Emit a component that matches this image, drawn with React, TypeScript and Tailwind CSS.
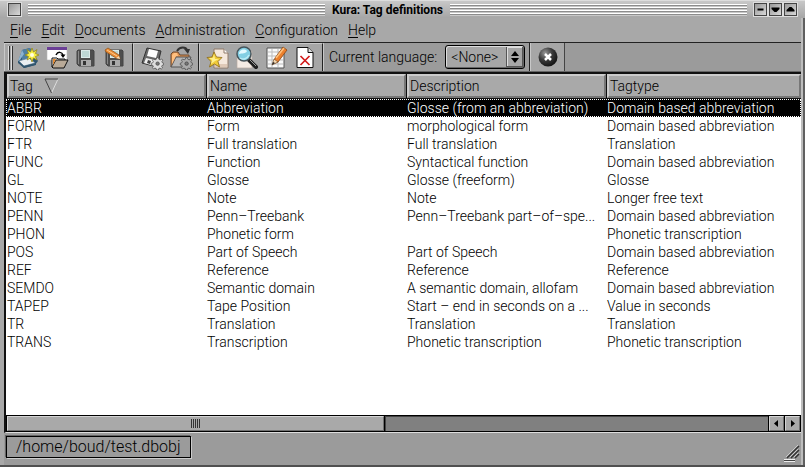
import type { ReactNode } from "react";

const menus = ["File", "Edit", "Documents", "Administration", "Configuration", "Help"];

const columns = ["Tag", "Name", "Description", "Tagtype"];

const rows = [
  ["ABBR", "Abbreviation", "Glosse (from an abbreviation)", "Domain based abbreviation"],
  ["FORM", "Form", "morphological form", "Domain based abbreviation"],
  ["FTR", "Full translation", "Full translation", "Translation"],
  ["FUNC", "Function", "Syntactical function", "Domain based abbreviation"],
  ["GL", "Glosse", "Glosse (freeform)", "Glosse"],
  ["NOTE", "Note", "Note", "Longer free text"],
  ["PENN", "Penn–Treebank", "Penn–Treebank part–of–spe...", "Domain based abbreviation"],
  ["PHON", "Phonetic form", "", "Phonetic transcription"],
  ["POS", "Part of Speech", "Part of Speech", "Domain based abbreviation"],
  ["REF", "Reference", "Reference", "Reference"],
  ["SEMDO", "Semantic domain", "A semantic domain, allofam", "Domain based abbreviation"],
  ["TAPEP", "Tape Position", "Start – end in seconds on a ...", "Value in seconds"],
  ["TR", "Translation", "Translation", "Translation"],
  ["TRANS", "Transcription", "Phonetic transcription", "Phonetic transcription"],
];

function Icon({ children }: { children: ReactNode }) {
  return (
    <svg viewBox="0 0 24 24" className="block size-6" aria-hidden="true">
      {children}
    </svg>
  );
}

const gear =
  "M16 10h2l.5 2 1.5.6 1.8-1 1.2 1.4-1.1 1.7.6 1.3 1.5.5v2l-1.7.5-.6 1.3 1 1.6-1.3 1.3-1.7-1-1.4.6-.5 1.7h-2l-.5-1.7-1.4-.6-1.6 1-1.3-1.3 1-1.6-.6-1.3-1.8-.5v-2l1.8-.5.6-1.3-1-1.7 1.3-1.4 1.7 1 1.4-.6z";

function Gear({ fill }: { fill: string }) {
  return (
    <g transform="translate(3 3) scale(.86)">
      <path d={gear} fill={fill} stroke="#444" strokeWidth=".8" />
      <circle cx="17" cy="17" r="2" fill="#777" stroke="#333" strokeWidth=".7" />
    </g>
  );
}

function Floppy() {
  return (
    <g>
      <path d="M4 4h15l1 1v15H5l-2-2V5z" fill="#4e4e4e" stroke="#444" />
      <path d="M7 4h9v8H7z" fill="#dcebea" />
      <path d="M8 6h7M8 8h7M8 10h7" stroke="#9fc4c0" />
      <path d="M7 14h10v6H7z" fill="#aaa" />
      <path d="M9 15h3v4H9z" fill="#333" />
      <path d="M4.500 5v13" stroke="#888" />
    </g>
  );
}

const tools: { label: string; art: ReactNode }[][] = [
  [
    {
      label: "New",
      art: (
        <Icon>
          <path d="M6 4l8-2 8 13-3 4-11 3-6-6z" fill="#2f5570" />
          <path d="M6 4l8-2 4 9-12 3z" fill="#4f7fa3" />
          <path d="M6 4L2 15l2-1 4-6z" fill="#8db3cf" />
          <path d="M3 15l10-3 6 5-11 3z" fill="#e9eef2" stroke="#66849b" strokeWidth=".7" />
          <path d="M2 15l6 5 12-3v2L8 22l-6-5z" fill="#31566f" />
          <path d="M16 2l1.500 4L21 3.500 19.500 7.500 23 9l-3.500 1.500L21 14l-3.500-2L16 16l-1.500-4L11 14l1.500-3.500L9 9l3.500-1.500L11 3.500 14.500 6z" fill="#f7ee45" stroke="#92861c" strokeWidth=".8" />
          <circle cx="16" cy="9" r="2" fill="#fffde0" />
        </Icon>
      ),
    },
    {
      label: "Open",
      art: (
        <Icon>
          <path d="M2 1h20v13H2z" fill="#fff" stroke="#bbb" strokeWidth=".6" />
          <path d="M2 1h20v3H2z" fill="#6b3f96" />
          <path d="M7 21V12h5l1 1h7v3" fill="#fff" stroke="#111" />
          <path d="M7 21l4-7h12l-4 8H8z" fill="#b9aa98" stroke="#111" />
          <path d="M8 20V13h3l-3 6z" fill="#e58b32" />
          <path d="M11 9c2-4 6-3 7 0" fill="none" stroke="#000" strokeWidth="1.500" />
          <path d="M15.500 8.500h5L18 12z" fill="#000" />
        </Icon>
      ),
    },
    { label: "Save", art: <Icon><Floppy /></Icon> },
    {
      label: "Save as",
      art: (
        <Icon>
          <Floppy />
          <path d="M2 4l3-2 11 7 1 4-4-1L3 6z" fill="#ea8c35" stroke="#8d4e14" strokeWidth=".7" />
          <path d="M4 4l10 6" stroke="#ffc98a" />
          <path d="M13 12l4 1-1-3z" fill="#f4dcb8" />
        </Icon>
      ),
    },
  ],
  [
    {
      label: "Save settings",
      art: (
        <Icon>
          <path d="M7 2l14 3-4 16L2 17z" fill="#686868" stroke="#333" />
          <path d="M9 3l9 2-2 7-9-2z" fill="#fff" />
          <path d="M6 12l9 2-1 6-10-3z" fill="#eee" />
          <path d="M8 14l3 1-1 3-3-1z" fill="#444" />
          <Gear fill="#ddd" />
        </Icon>
      ),
    },
    {
      label: "Open settings",
      art: (
        <Icon>
          <path d="M8 5c3-5 9-4 10-1" fill="none" stroke="#333" strokeWidth="2" />
          <path d="M15 3h6l-2 5z" fill="#333" />
          <path d="M2 21V8l2-2h5l2 3h9v5" fill="#df9250" stroke="#6c492e" />
          <path d="M2 21l5-10h15l-4 10z" fill="#b6b6b6" stroke="#555" />
          <path d="M3 18V9l2-2h3l1 3H7z" fill="#ffc080" />
          <Gear fill="#aaa" />
        </Icon>
      ),
    },
  ],
  [
    {
      label: "Add item",
      art: (
        <Icon>
          <path d="M8 3h10l4 4v15H8z" fill="#f5e8dc" stroke="#8f7b6b" />
          <path d="M18 3v4h4" fill="#fff" stroke="#8f7b6b" />
          <path d="M9 18h12v3H9z" fill="#dfc9b7" />
          <path d="M8 6l2.500 5 5.500.5-4 4 1.500 5.500L8.500 18l-5 3 1.500-5.500-4-4 5-.5z" fill="#f0cb39" stroke="#8a6817" strokeWidth=".8" />
          <path d="M8 8l1 5 4 0-4 2-4 3 1-4-3-2 4 0z" fill="#fff08b" />
        </Icon>
      ),
    },
    {
      label: "Find",
      art: (
        <Icon>
          <path d="M2 5h15v17H2z" fill="#f4ebe4" stroke="#b7a9a0" strokeWidth=".7" />
          <path d="M14 14l7 7" stroke="#1f1f1f" strokeWidth="4" strokeLinecap="round" />
          <path d="M15 14l6 6" stroke="#999" />
          <circle cx="9" cy="8" r="7" fill="#83cfe3" stroke="#46545b" strokeWidth="1.500" />
          <path d="M4 8c0-4 5-6 8-3-1 3-5 2-8 3z" fill="#e4faff" />
          <path d="M5 12c3 2 7 1 9-3" fill="none" stroke="#bcecf5" strokeWidth="1.500" />
        </Icon>
      ),
    },
    {
      label: "Edit item",
      art: (
        <Icon>
          <path d="M3 2h17v20H3z" fill="#fafafa" stroke="#555" />
          <path d="M4 6h15M4 10h15M4 14h15M4 18h15M8 3v18M14 3v18" stroke="#bbb" />
          <path d="M9 18l2-6L19 1l4 3-9 12z" fill="#ed802c" stroke="#874515" strokeWidth=".8" />
          <path d="M12 12l8-10" stroke="#ffc27c" strokeWidth="1.500" />
          <path d="M8 19l2-6 4 3z" fill="#f4d9b2" stroke="#6b4523" strokeWidth=".6" />
          <path d="M8 19l1-3 2 1z" fill="#222" />
        </Icon>
      ),
    },
    {
      label: "Delete item",
      art: (
        <Icon>
          <path d="M4 1.500h11l5 5v15H4z" fill="#fff" stroke="#111" />
          <path d="M15 1.500v5h5" fill="#ddd" stroke="#111" />
          <path d="M7.500 10l9 9M16.500 10l-9 9" stroke="#d21b1b" strokeWidth="1.700" />
        </Icon>
      ),
    },
  ],
];

const raised = "border border-t-[#d4d4d4] border-l-[#d4d4d4] border-r-[#707070] border-b-[#707070]";

function TitleButton({ label, children }: { label: string; children?: ReactNode }) {
  return (
    <button
      aria-label={label}
      className="size-[13px] shrink-0 border border-[#444] bg-linear-to-br from-[#999] to-[#d8d8d8] shadow-[0_0_0_1px_#ddd]"
    >
      <svg viewBox="0 0 11 11" className="block size-[11px]" aria-hidden="true">
        {children}
      </svg>
    </button>
  );
}

function Stripes() {
  return (
    <div className="h-3 flex-1 bg-[repeating-linear-gradient(to_bottom,#fff_0px,#fff_1px,#8c8c8c_1px,#8c8c8c_2px,#c8c8c8_2px,#c8c8c8_3px)]" />
  );
}

function ScrollButton({ label, d }: { label: string; d: string }) {
  return (
    <button aria-label={label} className={`h-full w-[15px] shrink-0 bg-[#a9a9a9] ${raised}`}>
      <svg viewBox="0 0 13 13" className="block size-[13px]" aria-hidden="true">
        <path d={d} fill="#000" />
      </svg>
    </button>
  );
}

export default function App() {
  return (
    <div className="relative flex min-h-screen flex-col border-b-2 border-[#505050] bg-[#9b9b9b] font-['Roboto','Liberation_Sans',sans-serif] text-sm leading-[18px] font-light text-black">
      <header className="flex h-[18px] items-center gap-[7px] border-t border-[#ddd] bg-linear-to-b from-[#c8c8c8] to-[#a6a6a6] px-2">
        <TitleButton label="Close" />
        <Stripes />
        <h1 className="text-xs leading-4 font-bold">Kura: Tag definitions</h1>
        <Stripes />
        <div className="flex gap-0.5">
          <TitleButton label="Iconify">
            <path d="M2.500 4.500h6v2h-6z" />
          </TitleButton>
          <TitleButton label="Lower">
            <path d="M1.500 3.500h8v1.500L6.500 8h-2l-3-3z" />
          </TitleButton>
          <TitleButton label="Raise">
            <path d="M1.500 7.500h8V6L6.500 3h-2l-3 3z" />
          </TitleButton>
        </div>
      </header>

      <div className="flex flex-1 flex-col border-r-2 border-l-4 border-r-[#606060] border-l-[#a8a8a8]">
        <div className="flex flex-1 flex-col border-r-2 border-r-[#bdbdbd]">
          <nav className="flex h-[25px] items-center border-b border-[#222] bg-[#a8a8a8] px-px">
            {menus.map((m) => (
              <button key={m} className="px-[5px]">
                <span className="underline underline-offset-2">{m[0]}</span>
                {m.slice(1)}
              </button>
            ))}
          </nav>

          <div className="flex h-[29px] border-b border-[#666]">
            {tools.map((group, i) => (
              <div key={i} className="flex items-center border-t border-r border-l border-t-[#c8c8c8] border-r-[#222] border-l-[#c8c8c8] bg-[#a6a6a6] px-[3px]">
                {i === 0 && (
                  <div className="flex gap-px">
                    <div className="h-6 w-0.5 border-r border-l border-l-[#ddd] border-r-[#333]" />
                    <div className="h-6 w-0.5 border-r border-l border-l-[#ddd] border-r-[#333]" />
                  </div>
                )}
                {group.map((t) => (
                  <button key={t.label} aria-label={t.label} className="flex w-[29px] justify-center">
                    {t.art}
                  </button>
                ))}
              </div>
            ))}
            <div className="flex items-center gap-2 border-r border-l border-r-[#222] border-l-[#c8c8c8] pr-1 pl-[5px]">
              <label htmlFor="language">Current language:</label>
              <div className="relative">
                <select
                  id="language"
                  className="block h-6 w-20 appearance-none rounded-[3px] border border-black bg-[#a6a6a6] pl-[5px] shadow-[inset_1px_1px_#ddd,inset_-1px_-1px_#666]"
                >
                  <option>&lt;None&gt;</option>
                </select>
                <svg viewBox="0 0 19 22" className="pointer-events-none absolute top-px right-px h-[22px] w-[19px]" aria-hidden="true">
                  <path d="M1.500 1v20" stroke="#555" />
                  <path d="M2.500 1v20M2 1.500h15" stroke="#ddd" />
                  <path d="M17.500 1v20M2 20.500h16" stroke="#555" />
                  <path d="M6 10l4-5 4 5zM6 12h8l-4 5z" />
                </svg>
              </div>
            </div>
            <div className="flex items-center border-r border-l border-r-[#444] border-l-[#c8c8c8] bg-[#a6a6a6] px-0.5">
              <button aria-label="Clear" className="flex w-[29px] justify-center">
                <Icon>
                  <defs>
                    <radialGradient id="ball" cx=".35" cy=".3" r=".75">
                      <stop offset="0" stopColor="#999" />
                      <stop offset=".5" stopColor="#3a3a3a" />
                      <stop offset="1" stopColor="#111" />
                    </radialGradient>
                  </defs>
                  <circle cx="12" cy="12" r="9.500" fill="url(#ball)" />
                  <path d="M9 9l6 6M15 9l-6 6" stroke="#fff" strokeWidth="2.500" />
                </Icon>
              </button>
            </div>
          </div>

          <main className="flex flex-1 flex-col border-t-2 border-b border-l-2 border-t-[#111] border-b-[#ddd] border-l-[#111] bg-white">
            <table className="w-full table-fixed border-collapse text-left">
              <colgroup>
                <col className="w-[200px]" />
                <col className="w-[200px]" />
                <col className="w-[200px]" />
                <col />
              </colgroup>
              <thead>
                <tr className="bg-[#111]">
                  {columns.map((c, i) => (
                    <th key={c} scope="col" className="p-0 pb-px pl-px font-light">
                      <div className="flex h-6 items-center gap-[11px] border-2 border-t-[#ccc] border-r-[#777] border-b-[#777] border-l-[#ccc] bg-[#a9a9a9] pl-px">
                        {c}
                        {i === 0 && (
                          <svg viewBox="0 0 15 16" className="h-4 w-[15px]" aria-hidden="true">
                            <path d="M14 1L7.500 15" fill="none" stroke="#ddd" />
                            <path d="M14 1H1l6.500 14" fill="none" stroke="#444" />
                          </svg>
                        )}
                      </div>
                    </th>
                  ))}
                </tr>
              </thead>
              <tbody>
                {rows.map((r, i) => (
                  <tr
                    key={r[0]}
                    className={i === 0 ? "bg-black text-white outline-1 -outline-offset-1 outline-dotted outline-white" : ""}
                  >
                    {r.map((cell, j) => (
                      <td key={j} className="h-[18px] overflow-hidden p-0 pl-px whitespace-nowrap">
                        {cell}
                      </td>
                    ))}
                  </tr>
                ))}
              </tbody>
            </table>

            <div className="mt-auto flex h-[17px] gap-px border-t border-b border-black bg-black pr-px pl-px">
              <div className={`flex w-[47.5%] items-center justify-center gap-px bg-[#a9a9a9] ${raised}`}>
                {[0, 1, 2, 3, 4].map((n) => (
                  <div key={n} className="h-[9px] w-px bg-[#333]" />
                ))}
              </div>
              <div className="flex-1 border-t border-l border-[#444] bg-[#808080]" />
              <ScrollButton label="Scroll left" d="M8 3v7L4 6.500z" />
              <ScrollButton label="Scroll right" d="M5 3v7l4-3.500z" />
            </div>
          </main>

          <footer className="flex h-8 items-start pt-[3px] pl-0.5">
            <div className="border border-black px-[9px] text-base leading-5 shadow-[1px_1px_#ccc,-1px_-1px_#666]">
              /home/boud/test.dbobj
            </div>
          </footer>
        </div>
      </div>

      <svg viewBox="0 0 18 18" className="absolute right-[3px] bottom-0.5 size-[18px]" aria-hidden="true">
        <path d="M3 13L15 1M7 13l8-8M11 13l4-4" stroke="#333" strokeWidth="1.500" />
        <path d="M2 12L14 0M6 12l8-8M10 12l4-4" stroke="#ccc" />
        <path d="M0 14.500h11M0 16.500h11" stroke="#eee" />
        <path d="M0 15.500h11" stroke="#444" />
      </svg>
    </div>
  );
}
